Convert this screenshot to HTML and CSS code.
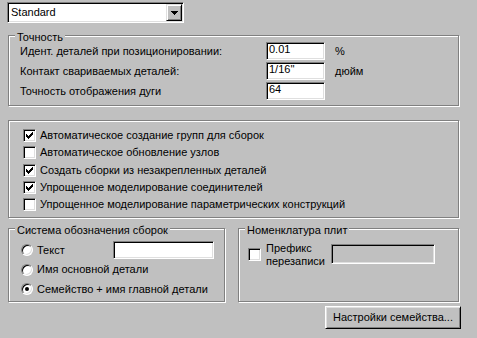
FILE: index.html
```html
<!DOCTYPE html>
<html>
<head>
<meta charset="utf-8">
<link rel="stylesheet" href="styles.css">
</head>
<body>
<div class="page">
  <div class="combo">
    <span class="combo-text">Standard</span>
    <span class="combo-btn"><svg width="7" height="4" viewBox="0 0 7 4" shape-rendering="crispEdges"><path d="M0 0H7V1H6V2H5V3H4V4H3V3H2V2H1V1H0Z" fill="#000"/></svg></span>
  </div>

  <div class="group g1">
    <div class="gtitle">Точность</div>
    <div class="grid">
      <span class="lbl">Идент. деталей при позиционировании:</span><span class="field">0.01</span><span class="unit">%</span>
      <span class="lbl">Контакт свариваемых деталей:</span><span class="field">1/16''</span><span class="unit">дюйм</span>
      <span class="lbl">Точность отображения дуги</span><span class="field">64</span><span class="unit"></span>
    </div>
  </div>

  <div class="group g2">
    <div class="chk-row"><span class="chk"><svg class="mark" width="7" height="7" viewBox="0 0 7 7" shape-rendering="crispEdges"><path d="M0 2H1V3H2V4H3V3H4V2H5V1H6V0H7V3H6V4H5V5H4V6H3V7H2V6H1V5H0Z" fill="#000"/></svg></span><span>Автоматическое создание групп для сборок</span></div>
    <div class="chk-row"><span class="chk"></span><span>Автоматическое обновление узлов</span></div>
    <div class="chk-row"><span class="chk"><svg class="mark" width="7" height="7" viewBox="0 0 7 7" shape-rendering="crispEdges"><path d="M0 2H1V3H2V4H3V3H4V2H5V1H6V0H7V3H6V4H5V5H4V6H3V7H2V6H1V5H0Z" fill="#000"/></svg></span><span>Создать сборки из незакрепленных деталей</span></div>
    <div class="chk-row"><span class="chk"><svg class="mark" width="7" height="7" viewBox="0 0 7 7" shape-rendering="crispEdges"><path d="M0 2H1V3H2V4H3V3H4V2H5V1H6V0H7V3H6V4H5V5H4V6H3V7H2V6H1V5H0Z" fill="#000"/></svg></span><span>Упрощенное моделирование соединителей</span></div>
    <div class="chk-row"><span class="chk"></span><span>Упрощенное моделирование параметрических конструкций</span></div>
  </div>

  <div class="bottom">
    <div class="group g3">
      <div class="gtitle">Система обозначения сборок</div>
      <div class="radio-row"><span class="radio"></span><span class="rlabel">Текст</span><span class="field wide"></span></div>
      <div class="radio-row r2"><span class="radio"></span><span>Имя основной детали</span></div>
      <div class="radio-row"><span class="radio on"></span><span>Семейство + имя главной детали</span></div>
    </div>
    <div class="group g4">
      <div class="gtitle">Номенклатура плит</div>
      <div class="prefix-row">
        <span class="chk prefix-chk"></span>
        <span class="prefix-lbl">Префикс<br>перезаписи</span>
        <span class="field disabled"></span>
      </div>
    </div>
  </div>

  <div class="actions"><button class="btn">Настройки семейства...</button></div>
</div>
</body>
</html>
```
FILE: styles.css
```css
html, body {
  margin: 0;
  padding: 0;
}
body {
  background: #c0c0c0;
  font-family: "Liberation Sans", Arial, sans-serif;
  font-size: 11px;
  line-height: 13px;
  color: #000;
  width: 477px;
  height: 338px;
  overflow: hidden;
}
.page {
  padding: 2px 0 0 8px;
  width: 451px;
}

/* sunken / raised bevels */
.combo, .field, .chk {
  box-sizing: border-box;
  border: 1px solid;
  border-color: #808080 #fff #fff #808080;
  box-shadow: inset 1px 1px 0 #000, inset -1px -1px 0 #dfdfdf;
  background: #fff;
}

.combo {
  margin-left: -1px;
  width: 177px;
  height: 21px;
  display: flex;
  padding: 1px;
}
.combo-text {
  flex: 1;
  padding-left: 2px;
  line-height: 17px;
}
.combo-btn {
  box-sizing: border-box;
  width: 16px;
  height: 17px;
  background: #c0c0c0;
  border: 1px solid;
  border-color: #dfdfdf #000 #000 #dfdfdf;
  box-shadow: inset 1px 1px 0 #fff, inset -1px -1px 0 #808080;
  display: flex;
  align-items: center;
  justify-content: center;
  padding-left: 1px;
}
.combo-btn svg { display: block; }

.group {
  box-sizing: border-box;
  border: 1px solid #808080;
  box-shadow: 1px 1px 0 #fff, inset 1px 1px 0 #fff;
  display: flex;
  flex-direction: column;
}
.gtitle {
  margin: -5px 0 0 6px;
  padding: 0 2px;
  height: 13px;
  background: #c0c0c0;
  align-self: flex-start;
  white-space: nowrap;
}

.g1 {
  margin-top: 12px;
  height: 71px;
  padding: 0 0 0 11px;
}
.g1 .gtitle { margin-left: -5px; margin-bottom: -2px; }
.grid {
  display: grid;
  grid-template-columns: 246px 59px auto;
  grid-auto-rows: 18px;
  row-gap: 2px;
}
.lbl, .unit {
  padding-top: 3px;
  white-space: nowrap;
}
.unit { padding-left: 10px; }
.field {
  padding: 1px 0 0 2px;
  line-height: 11px;
}

.g2 {
  margin-top: 14px;
  height: 98px;
  padding: 6px 0 0 14px;
}
.chk-row {
  display: flex;
  align-items: center;
  height: 17px;
  white-space: nowrap;
}
.chk-row:nth-child(3) { height: 18px; }
.chk {
  width: 13px;
  height: 13px;
  flex: none;
  display: flex;
  align-items: center;
  justify-content: center;
  margin-right: 4px;
}
.mark { display: block; }

.bottom {
  display: flex;
  margin-top: 10px;
  height: 74px;
}
.g3 {
  width: 217px;
  height: 74px;
  padding: 0 0 0 12px;
}
.g3 .gtitle { margin-left: -6px; margin-bottom: 3px; }
.radio-row {
  display: flex;
  align-items: center;
  height: 20px;
  white-space: nowrap;
}
.radio-row.r2 { height: 19px; }
.radio {
  box-sizing: border-box;
  width: 12px;
  height: 12px;
  flex: none;
  border-radius: 50%;
  background: #fff;
  border: 1px solid;
  border-color: #808080 #fff #fff #808080;
  box-shadow: inset 1px 1px 0 #000, inset -1px -1px 0 #dfdfdf;
  margin-right: 4px;
  display: flex;
  align-items: center;
  justify-content: center;
}
.radio.on::after {
  content: "";
  width: 4px;
  height: 4px;
  border-radius: 50%;
  background: #000;
}
.rlabel { width: 76px; }
.field.wide {
  width: 101px;
  height: 18px;
}

.g4 {
  margin-left: 13px;
  width: 221px;
  height: 74px;
  padding: 0 0 0 9px;
}
.g4 .gtitle { margin-left: -3px; margin-bottom: 5px; }
.prefix-row {
  display: flex;
  align-items: flex-start;
}
.prefix-chk {
  margin-top: 6px;
  margin-right: 5px;
}
.prefix-lbl {
  width: 62px;
  white-space: nowrap;
}
.field.disabled {
  margin-left: 3px;
  margin-top: 2px;
  width: 104px;
  height: 20px;
  background: #c0c0c0;
}

.actions {
  display: flex;
  justify-content: flex-end;
  margin-right: -2px;
  margin-top: 4px;
}
.btn {
  box-sizing: border-box;
  width: 136px;
  height: 23px;
  padding: 0;
  font: inherit;
  color: #000;
  background: #c0c0c0;
  border: 1px solid;
  border-color: #fff #000 #000 #fff;
  box-shadow: inset 1px 1px 0 #dfdfdf, inset -1px -1px 0 #808080;
  text-align: center;
}
```
